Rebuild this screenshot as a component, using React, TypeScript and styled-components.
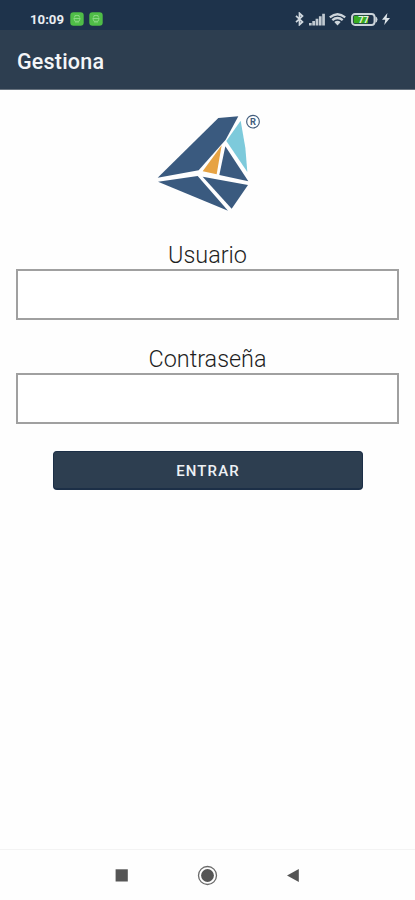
import React from 'react';
import styled, { createGlobalStyle } from 'styled-components';

const GlobalStyle = createGlobalStyle`
  * { box-sizing: border-box; }
  body { margin: 0; background: #fefefe; font-family: Roboto, "Liberation Sans", sans-serif; }
`;

const Screen = styled.div`
  display: flex;
  flex-direction: column;
  width: 100%;
  height: 900px;
  background: #fefefe;
`;

const StatusBar = styled.div`
  display: flex;
  align-items: center;
  justify-content: space-between;
  height: 30px;
  padding: 8px 25px 0 30px;
  background: #1e334b;
`;

const StatusGroup = styled.div<{ $gap: number }>`
  display: flex;
  align-items: center;
  gap: ${({ $gap }) => $gap}px;
`;

const Clock = styled.span`
  width: 34px;
  margin-right: 1px;
  color: #e9eef2;
  font-size: 13.2px;
  font-weight: 700;
  line-height: 15px;
`;

const AppBar = styled.header`
  display: flex;
  align-items: center;
  height: 60px;
  padding: 4px 17px 0;
  background: #2d3e50;
  border-bottom: 1px solid #67727e;
`;

const Title = styled.h1`
  margin: 0;
  color: #f4f6f8;
  font-size: 21.5px;
  font-weight: 500;
  line-height: 28px;
  letter-spacing: 0.2px;
`;

const Form = styled.main`
  display: flex;
  flex: 1;
  flex-direction: column;
  align-items: center;
  padding: 15px 16px 0;
`;

const Logo = styled.svg`
  display: block;
  flex: none;
  width: 130px;
  height: 115px;
  margin-left: 4px;
`;

const Field = styled.label`
  display: flex;
  flex-direction: column;
  align-items: center;
  width: 100%;
  margin: 21px 0 4px;
`;

const FieldLabel = styled.span`
  color: #1f1f1f;
  font-size: 23.4px;
  font-weight: 350;
  line-height: 28px;
`;

const Input = styled.input`
  width: 100%;
  height: 51px;
  padding: 0 12px;
  border: 2px solid #a0a0a0;
  border-radius: 0;
  outline: none;
  background: #fff;
  color: #1c1c1c;
  font: inherit;
  font-size: 20px;
`;

const SubmitButton = styled.button`
  width: 310px;
  height: 39px;
  margin: 23px 0 0;
  padding: 1px 0 0 1px;
  border: 1px solid #1c2f47;
  border-bottom-width: 2px;
  border-radius: 4px;
  background: #2d3e50;
  color: #eef1f5;
  font: 500 15px Roboto, "Liberation Sans", sans-serif;
  letter-spacing: 1.1px;
`;

const NavBar = styled.nav`
  display: flex;
  justify-content: center;
  align-items: center;
  gap: 65px;
  height: 51px;
  border-top: 1px solid #f3f3f3;
`;

const NavIcon = styled.svg`
  display: block;
  width: 21px;
  height: 21px;
`;

const Glyph = styled.svg`
  display: block;
  flex: none;
`;

const NotificationIcon = () => (
  <Glyph width="14" height="14" viewBox="0 0 14 14">
    <rect x="0.3" y="0.3" width="13.4" height="13.4" rx="3.2" fill="#4fbd47" />
    <path d="M3.800 6.500h6.400L9 9.300H5ZM4.300 5.600a2.700 2.300 0 0 1 5.400 0M4.700 2.900l.9 1M9.300 2.900l-.9 1M6 9.700v1.500M8 9.700v1.500" fill="none" stroke="#97dd90" strokeWidth=".8" />
  </Glyph>
);

const BluetoothIcon = () => (
  <Glyph width="9" height="14" viewBox="0 0 9 14">
    <path d="M1 3.900 7.500 9.900 4.500 12.700V1.300L7.500 4.100 1 10.100" fill="none" stroke="#d0d8df" strokeWidth="1.700" />
  </Glyph>
);

const SignalIcon = () => (
  <Glyph width="16" height="13" viewBox="0 0 16 13">
    <path d="M0 10h2.700v2.500H0zM3.300 8H6v4.500H3.300zM6.600 5.800h2.700v6.700H6.600zM9.900 3.300h2.700v9.200H9.900zM13.200.8h2.700v11.700h-2.700z" fill="#c1cad2" />
  </Glyph>
);

const WifiIcon = () => (
  <Glyph width="17" height="13" viewBox="0 0 17 13">
    <path d="M.8 4.400Q8.500-2 16.200 4.400M3.300 7.200Q8.500 2.900 13.700 7.200" fill="none" stroke="#ced6dc" strokeWidth="2.300" />
    <path d="M5.300 9Q8.500 6.300 11.700 9L8.500 12.600Z" fill="#ced6dc" />
  </Glyph>
);

const BatteryIcon = () => (
  <Glyph width="27" height="13" viewBox="0 0 27 13">
    <rect x="1" y="1" width="22.500" height="11" rx="3" fill="#1e334b" stroke="#cbd3d9" strokeWidth="1.900" />
    <path d="M24.300 3.300q2.200.7 2.200 3.200t-2.200 3.200Z" fill="#cbd3d9" />
    <path d="M4 2.700h13v7.600H4q-1.300 0-1.300-1.300V4q0-1.300 1.300-1.300Z" fill="#39ad22" />
    <text x="12.600" y="9.900" textAnchor="middle" fontFamily="Roboto, sans-serif" fontSize="9.500" fontWeight="700" fill="#e5f3df">77</text>
  </Glyph>
);

const ChargingIcon = () => (
  <Glyph width="8" height="12" viewBox="0 0 8 12">
    <path d="M5.400 0 0 6.800h3.300L2.200 12 8 4.900H4.600Z" fill="#dce3e8" />
  </Glyph>
);

const GestionaLogo = () => (
  <Logo viewBox="0 0 390 345" role="img" aria-label="Gestiona">
    <path d="M220 39 280 34 242 104 161 196 38 218Z" fill="#3a5a7f" />
    <path d="M287 47 244 108 307 201 301 128Z" fill="#7dcadb" />
    <path d="M230 121 173 199 215 208Z" fill="#e7a343" />
    <path d="M241 124 223 210 310 229Z" fill="#3a5a7f" />
    <path d="M39 230 158 213 249 317Z" fill="#3a5a7f" />
    <path d="M173 215 309 240 260 311Z" fill="#3a5a7f" />
    <circle cx="324" cy="50" r="19" fill="none" stroke="#425d7d" strokeWidth="3.500" />
    <text x="324" y="60" textAnchor="middle" fontFamily="Roboto, sans-serif" fontSize="28" fontWeight="700" fill="#425d7d">R</text>
  </Logo>
);

export default function App() {
  return (
    <Screen>
      <GlobalStyle />
      <StatusBar>
        <StatusGroup $gap={5}>
          <Clock>10:09</Clock>
          <NotificationIcon />
          <NotificationIcon />
        </StatusGroup>
        <StatusGroup $gap={4.5}>
          <BluetoothIcon />
          <SignalIcon />
          <WifiIcon />
          <BatteryIcon />
          <ChargingIcon />
        </StatusGroup>
      </StatusBar>
      <AppBar>
        <Title>Gestiona</Title>
      </AppBar>
      <Form>
        <GestionaLogo />
        <Field>
          <FieldLabel>Usuario</FieldLabel>
          <Input type="text" />
        </Field>
        <Field>
          <FieldLabel>Contraseña</FieldLabel>
          <Input type="password" />
        </Field>
        <SubmitButton type="button">ENTRAR</SubmitButton>
      </Form>
      <NavBar>
        <NavIcon viewBox="0 0 21 21">
          <rect x="4.600" y="4.300" width="12.200" height="12.200" fill="#555" />
        </NavIcon>
        <NavIcon viewBox="0 0 21 21">
          <circle cx="10.500" cy="10.500" r="9" fill="none" stroke="#6a6a6a" strokeWidth="1.300" />
          <circle cx="10.500" cy="10.500" r="6.400" fill="#555" />
        </NavIcon>
        <NavIcon viewBox="0 0 21 21">
          <path d="M4 10.500 15.800 4v13Z" fill="#555" />
        </NavIcon>
      </NavBar>
    </Screen>
  );
}
